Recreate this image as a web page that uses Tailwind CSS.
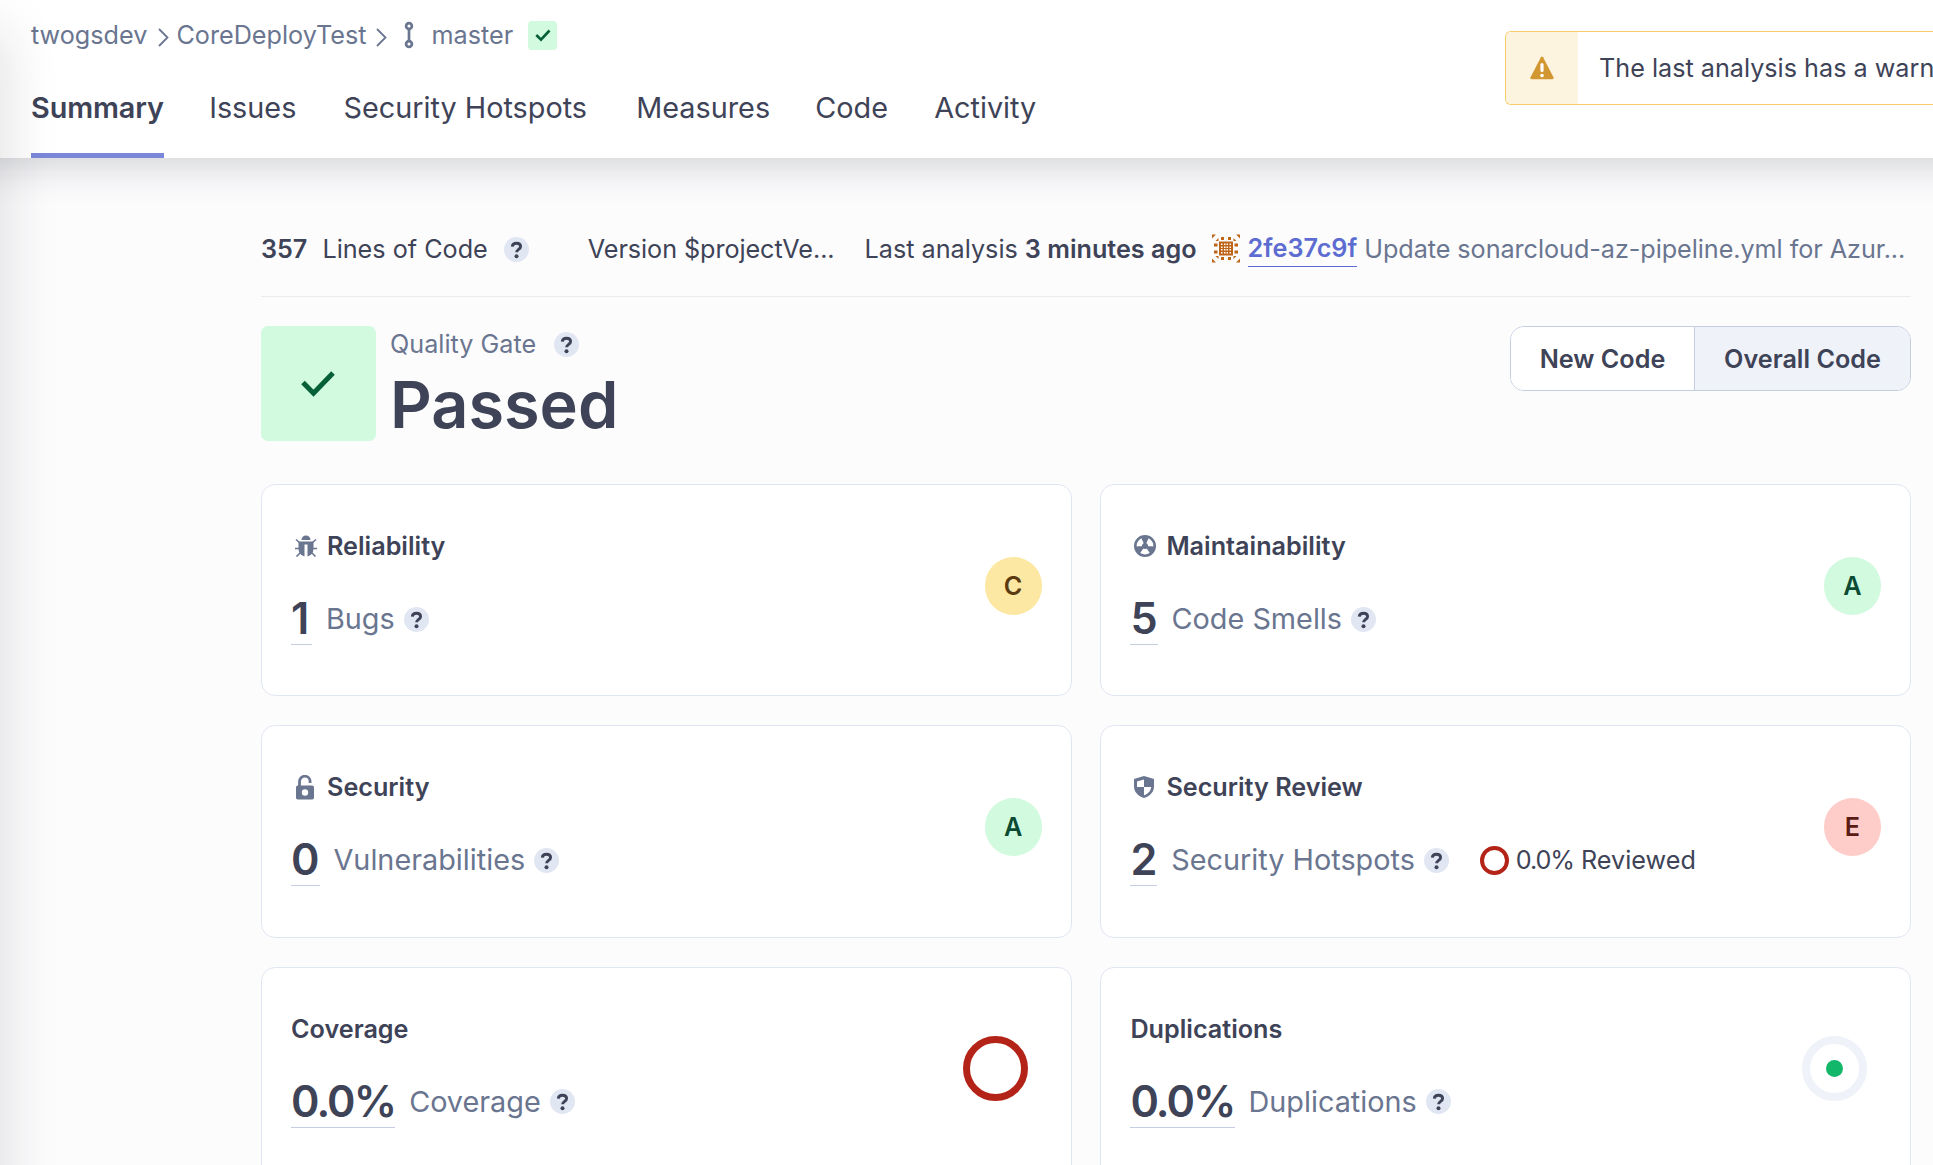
<!DOCTYPE html>
<html lang="en">
<head>
<meta charset="utf-8">
<title>CoreDeployTest - Summary</title>
<script src="https://cdn.jsdelivr.net/npm/@tailwindcss/browser@4"></script>
</head>
<body class="relative h-[1165px] w-[1933px] overflow-hidden bg-[#fcfcfd] font-['Inter',sans-serif] text-[25.2px] leading-9 text-[#3e4357]">
<svg class="hidden">
  <symbol id="help" viewBox="0 0 25 25">
    <circle cx="12.5" cy="12.5" r="12.5" fill="#e1e6f3"/>
    <path d="M8.300 9.600C8.500 7.200 10.200 6.300 12.500 6.300c2.400 0 4.100 1.200 4.100 3.300 0 2.800-4 2.900-4 5.700" fill="none" stroke="#3e4357" stroke-width="2.900"/>
    <circle cx="12.500" cy="19.200" r="2" fill="#3e4357"/>
  </symbol>
</svg>

<header class="relative -mx-[100px] flex h-[158px] justify-between bg-white px-[100px] shadow-[0_8px_36px_rgba(29,33,47,0.19)]">
  <div class="flex flex-col pl-[31px]">
    <div class="mt-[17px] flex h-9 items-center text-[#6a7590]">
      <span>twogsdev</span>
      <svg class="ml-[11px] mr-[7px] h-[19px] w-[11px] translate-y-[2px]" viewBox="0 0 11 19" fill="none" stroke="#6a7590" stroke-width="1.800"><path d="M1 1l8.500 8.500L1 18"/></svg>
      <span>CoreDeployTest</span>
      <svg class="ml-[10px] h-[19px] w-[11px] translate-y-[2px]" viewBox="0 0 11 19" fill="none" stroke="#6a7590" stroke-width="1.800"><path d="M1 1l8.500 8.500L1 18"/></svg>
      <svg class="ml-[17px] mr-[17px] h-[30px] w-[10px]" viewBox="0 0 10 30" fill="none" stroke="#6a7590" stroke-width="2.700"><circle cx="5" cy="6" r="2.900"/><circle cx="5" cy="24" r="2.900"/><path d="M5 9v12"/></svg>
      <span>master</span>
      <span class="ml-[15px] flex h-[29px] w-[29px] items-center justify-center rounded-[4px] bg-[#d1fadf]">
        <svg class="h-[13px] w-[16px]" viewBox="0 0 16 13" fill="none" stroke="#055f37" stroke-width="2.600"><path d="M1.300 6l4.700 4.700L14.500 1.500"/></svg>
      </span>
    </div>
    <nav class="mt-[22px] flex h-[83px] gap-[43.2px] text-[28.8px] leading-[66px]">
      <a class="w-[133px] whitespace-nowrap border-b-[5px] border-[#7b87d9] font-semibold tracking-[-0.1px]">Summary</a>
      <a class="ml-[2px]">Issues</a>
      <a class="ml-[4px]">Security Hotspots</a>
      <a class="ml-[6px]">Measures</a>
      <a class="ml-[2px]">Code</a>
      <a class="ml-[3px]">Activity</a>
    </nav>
  </div>
  <div class="mt-[31px] flex h-[74px] w-[428px] overflow-hidden rounded-l-[6px] border border-r-0 border-[#f5cc68]">
    <div class="flex w-[72px] shrink-0 items-center justify-center bg-[#fdf4e0]">
      <svg class="h-[24px] w-[24px]" viewBox="0 0 24 24"><path d="M10.900 1.200Q12 0 13.100 1.200L23.600 21.500Q24 23 22.500 23.300H1.500Q0 23 .4 21.500z" fill="#d29730"/><path d="M12 8.500v6" stroke="#fff" stroke-width="3.200" stroke-linecap="round"/><circle cx="12" cy="19.600" r="1.800" fill="#fff"/></svg>
    </div>
    <p class="ml-[21px] whitespace-nowrap leading-[72px]">The last analysis has a warning.</p>
  </div>
</header>

<main class="ml-[261px] w-[1650px]">
  <div class="flex h-[139px] items-center whitespace-nowrap border-b border-[#ebebed] pt-[43px]">
    <div class="flex items-center pt-px"><b class="font-semibold">357</b><span class="ml-[15px]">Lines of Code</span><svg class="ml-[16px] h-[25px] w-[25px]"><use href="#help"/></svg></div>
    <span class="ml-[59px] tracking-[-0.07px]">Version $projectVe...</span>
    <span class="ml-[30px]">Last analysis <b class="font-semibold">3 minutes ago</b></span>
    <svg class="ml-[15px] h-[29px] w-[28px]" viewBox="0 0 28 28" fill="#bf6518">
      <path d="M0 0h4L0 4zM28 0h-4l4 4zM0 28h4l-4-4zM28 28h-4l4-4z"/>
      <path d="M9 2.500h3v3H9zM16 2.500h3v3h-3zM9 22.500h3v3H9zM16 22.500h3v3h-3zM2 9h3.500v3H2zM2 16h3.500v3H2zM22.500 9H26v3h-3.500zM22.500 16H26v3h-3.500zM3.500 6.500l3-3v3zM24.500 6.500l-3-3v3zM3.500 21.500l3 3v-3zM24.500 21.500l-3 3v-3z"/>
      <path d="M7 7h14v14H7z"/>
      <path d="M9 9h1.500v1.500H9zM12 9h1.500v1.500H12zM14.500 9H16v1.500h-1.500zM17.500 9H19v1.500h-1.500zM9 12h1.500v1.500H9zM12 12h1.500v1.500H12zM14.500 12H16v1.500h-1.500zM17.500 12H19v1.500h-1.500zM9 14.500h1.500V16H9zM12 14.500h1.500V16H12zM14.500 14.500H16V16h-1.500zM17.500 14.500H19V16h-1.500zM9 17.500h1.500V19H9zM12 17.500h1.500V19H12zM14.500 17.500H16V19h-1.500zM17.500 17.500H19V19h-1.500z" fill="#fff"/>
    </svg>
    <a class="ml-[8px] border-b border-[#5d6cd0] font-semibold text-[#5d6cd0]">2fe37c9f</a>
    <span class="ml-[7px] pt-px tracking-[-0.05px] text-[#6a7590]">Update sonarcloud-az-pipeline.yml for Azur...</span>
  </div>

  <div class="mt-[29px] flex h-[115px]">
    <div class="flex w-[115px] items-center justify-center rounded-[7px] bg-[#d1fadf] pr-[2px]">
      <svg class="h-[26px] w-[34px]" viewBox="0 0 34 26" fill="none" stroke="#055f37" stroke-width="5"><path d="M2 11.500l10.500 10.700L32 2"/></svg>
    </div>
    <div class="ml-[14px]">
      <div class="flex h-9 items-center text-[#6a7590]">Quality Gate<svg class="ml-[18px] h-[25px] w-[25px]"><use href="#help"/></svg></div>
      <div class="mt-1 text-[64.8px] font-semibold leading-[78px]">Passed</div>
    </div>
    <div class="ml-auto flex h-[65px] overflow-hidden rounded-[14px] border border-[#c5cde0] text-center font-semibold leading-[64px]">
      <span class="w-[183px] bg-white">New Code</span>
      <span class="w-[216px] border-l border-[#c5cde0] bg-[#eff2f9]">Overall Code</span>
    </div>
  </div>

  <div class="mt-[43px] grid grid-cols-2 gap-x-[28.8px] gap-y-[28.9px]">
    <section class="flex h-[212.4px] justify-between rounded-[14px] border border-[#e1e6f3] bg-white px-[29px] pt-[43px]">
      <div>
        <h3 class="flex h-9 items-center font-semibold">
          <svg class="ml-[4px] mr-[10px] h-[22px] w-[22px]" viewBox="0 0 22 22"><path d="M6.500 5a4.500 4.500 0 0 1 9 0z" fill="#6a7590"/><path d="M3.500 6.500h15V14a7.500 7.500 0 0 1-15 0z" fill="#6a7590"/><path d="M1 4.500l4 3.500M21 4.500L17 8M0 13.500h4M22 13.500h-4M1.500 21.500l4-4M20.500 21.500l-4-4" stroke="#6a7590" stroke-width="1.600"/><path d="M9.500 9.500h3V22h-3z" fill="#fff"/></svg>Reliability</h3>
        <div class="mt-[28px] flex h-[54px] items-center"><a class="w-[21px] border-b border-[#c5cde0] text-[43.2px] font-semibold leading-[51px]">1</a><span class="ml-[14px] text-[28.8px] text-[#6a7590]">Bugs</span><svg class="ml-[9px] h-[25px] w-[25px]"><use href="#help"/></svg></div>
      </div>
      <div class="mt-[29px] h-[58px] w-[57px] rounded-full bg-[#fce8a2] text-center font-semibold leading-[58px] text-[#5b3a12]">C</div>
    </section>

    <section class="flex h-[212.4px] justify-between rounded-[14px] border border-[#e1e6f3] bg-white px-[29px] pt-[43px]">
      <div>
        <h3 class="flex h-9 items-center font-semibold">
          <svg class="ml-[4px] mr-[10px] h-[22px] w-[22px]" viewBox="0 0 22 22"><circle cx="11" cy="11" r="9.700" fill="#fff" stroke="#6a7590" stroke-width="2.600"/><path d="M11 11L6.800 2h8.400zM11 11L1 11.500 5.500 19zM11 11l10 .5L16.500 19z" fill="#6a7590"/><circle cx="11" cy="11" r="3" fill="#6a7590"/></svg>Maintainability</h3>
        <div class="mt-[28px] flex h-[54px] items-center"><a class="border-b border-[#c5cde0] text-[43.2px] font-semibold leading-[51px]">5</a><span class="ml-[14px] text-[28.8px] text-[#6a7590]">Code Smells</span><svg class="ml-[9px] h-[25px] w-[25px]"><use href="#help"/></svg></div>
      </div>
      <div class="mt-[29px] h-[58px] w-[57px] rounded-full bg-[#d1fadf] text-center font-semibold leading-[58px] text-[#0b4a33]">A</div>
    </section>

    <section class="flex h-[212.4px] justify-between rounded-[14px] border border-[#e1e6f3] bg-white px-[29px] pt-[43px]">
      <div>
        <h3 class="flex h-9 items-center font-semibold">
          <svg class="ml-[5px] mr-[13px] h-[25px] w-[18px]" viewBox="0 0 18 25"><path d="M3.500 11V6.500a5.300 5.300 0 0 1 10.600 0V8" fill="none" stroke="#6a7590" stroke-width="2.800"/><rect y="10.500" width="18" height="14" rx="1.800" fill="#6a7590"/><circle cx="9" cy="17.500" r="3.200" fill="#fff"/></svg>Security</h3>
        <div class="mt-[28px] flex h-[54px] items-center"><a class="border-b border-[#c5cde0] text-[43.2px] font-semibold leading-[51px]">0</a><span class="ml-[14px] text-[28.8px] text-[#6a7590]">Vulnerabilities</span><svg class="ml-[9px] h-[25px] w-[25px]"><use href="#help"/></svg></div>
      </div>
      <div class="mt-[29px] h-[58px] w-[57px] rounded-full bg-[#d1fadf] text-center font-semibold leading-[58px] text-[#0b4a33]">A</div>
    </section>

    <section class="flex h-[212.4px] justify-between rounded-[14px] border border-[#e1e6f3] bg-white px-[29px] pt-[43px]">
      <div>
        <h3 class="flex h-9 items-center font-semibold">
          <svg class="ml-[4px] mr-[12px] h-[22px] w-[20px]" viewBox="0 0 20 22"><path d="M10 0l10 3v7c0 6-4 10-10 12C4 20 0 16 0 10V3z" fill="#6a7590"/><path d="M10 3.500V11H3V5.500z M10 11h7.200c-.3 4-3 6.800-7.200 8.300z" fill="#fff"/></svg>Security Review</h3>
        <div class="mt-[28px] flex h-[54px] items-center"><a class="border-b border-[#c5cde0] text-[43.2px] font-semibold leading-[51px]">2</a><span class="ml-[14px] text-[28.8px] text-[#6a7590]">Security Hotspots</span><svg class="ml-[9px] h-[25px] w-[25px]"><use href="#help"/></svg><span class="ml-[31px] h-[29px] w-[29px] rounded-full border-[4px] border-[#b42318]"></span><span class="ml-[7px]"><span class="tracking-[-1.100px]">0.0%</span> Reviewed</span></div>
      </div>
      <div class="mt-[29px] h-[58px] w-[57px] rounded-full bg-[#fecdca] text-center font-semibold leading-[58px] text-[#5a1b14]">E</div>
    </section>

    <section class="flex h-[212.4px] justify-between rounded-[14px] border border-[#e1e6f3] bg-white px-[29px] pt-[43px]">
      <div>
        <h3 class="flex h-9 items-center font-semibold">Coverage</h3>
        <div class="mt-[28px] flex h-[54px] items-center"><a class="border-b border-[#c5cde0] text-[43.2px] font-semibold leading-[51px] tracking-[-1.900px]">0.0%</a><span class="ml-[14px] text-[28.8px] text-[#6a7590]">Coverage</span><svg class="ml-[9px] h-[25px] w-[25px]"><use href="#help"/></svg></div>
      </div>
      <div class="mr-[14px] mt-[25px] h-[65px] w-[65px] rounded-full border-[7px] border-[#b42318]"></div>
    </section>

    <section class="flex h-[212.4px] justify-between rounded-[14px] border border-[#e1e6f3] bg-white px-[29px] pt-[43px]">
      <div>
        <h3 class="flex h-9 items-center font-semibold">Duplications</h3>
        <div class="mt-[28px] flex h-[54px] items-center"><a class="border-b border-[#c5cde0] text-[43.2px] font-semibold leading-[51px] tracking-[-1.900px]">0.0%</a><span class="ml-[14px] text-[28.8px] text-[#6a7590]">Duplications</span><svg class="ml-[9px] h-[25px] w-[25px]"><use href="#help"/></svg></div>
      </div>
      <div class="mr-[14px] mt-[25px] flex h-[65px] w-[65px] items-center justify-center rounded-full border-[8px] border-[#eff2f9]"><span class="h-[17px] w-[17px] rounded-full bg-[#12b76a]"></span></div>
    </section>
  </div>
</main>

<!-- shadow cast by the sidebar left of the viewport -->
<div class="pointer-events-none absolute -left-[100px] top-[30px] h-[1300px] w-[100px] shadow-[6px_0_54px_rgba(29,33,47,0.13)]"></div>
</body>
</html>
